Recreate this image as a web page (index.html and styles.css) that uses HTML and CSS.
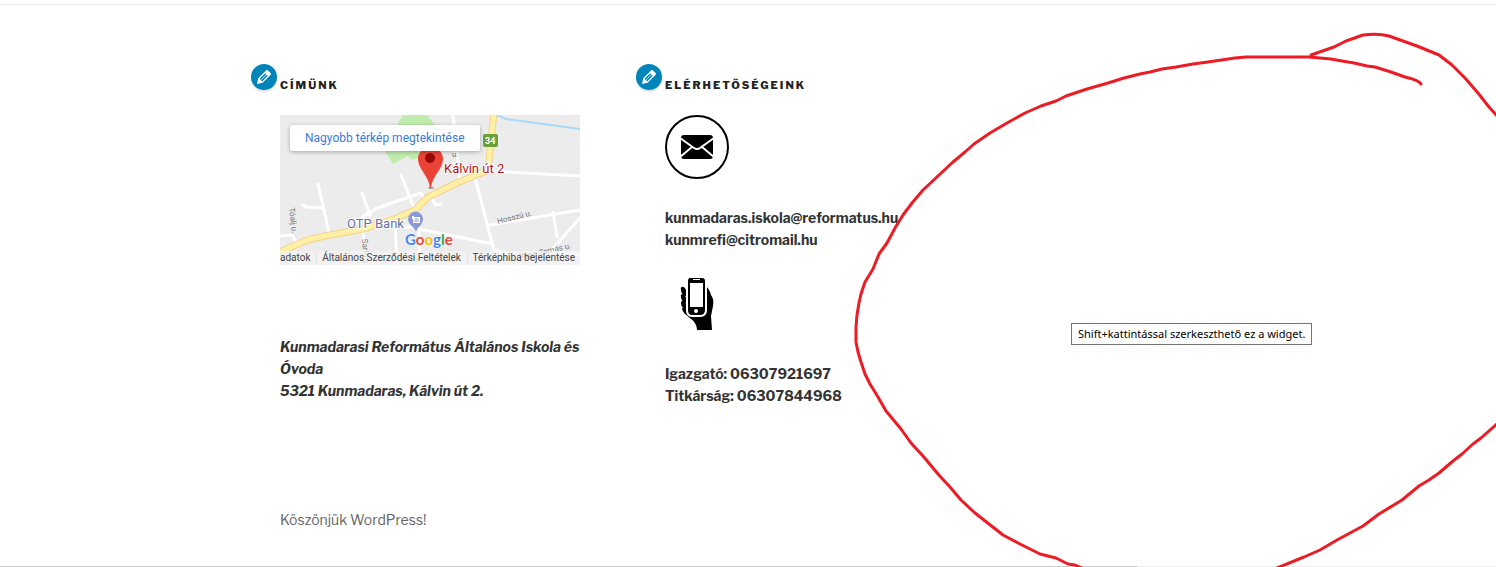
FILE: index.html
```html
<!DOCTYPE html>
<html lang="hu">
<head>
    <meta charset="UTF-8">
    <meta name="viewport" content="width=device-width, initial-scale=1.0">
    <title>Kunmadarasi Református Általános Iskola és Óvoda</title>
    <link rel="stylesheet" href="styles.css">
</head>
<body>

<div class="page">
    <footer class="site-footer">
        <div class="wrap">
            <div class="widgets">
                <section class="widget">
                    <button type="button" class="edit" aria-label="Widget szerkesztése">
                        <svg width="20" height="20" viewBox="0 0 20 20"><path fill="#fff" d="M13.890 3.390l2.710 2.720c.46.46.42 1.240.03 1.640l-8.010 8.020-5.560 1.160 1.160-5.580s7.600-7.630 7.990-8.030c.39-.39 1.220-.39 1.680.07zm-2.730 2.790l-5.590 5.610 1.110 1.110 5.540-5.650zm-2.970 8.230l5.580-5.600-1.070-1.080-5.590 5.600z"/></svg>
                    </button>
                    <h2>Címünk</h2>
                    <div class="map">
                        <svg class="map-canvas" viewBox="0 0 300 150">
                            <rect width="300" height="150" fill="#ececec"/>
                            <path fill="#c0ecae" d="M123 0h24l10 12v22l-17 8-8 3-4-4-15 8-8-13 12-26z"/>
                            <path class="water" d="M217 0l9 4 74 10"/>
                            <g class="road">
                                <path d="M38 69l11 48M23 90l3 2 16 1M82 78l8 22M75 109c10-10 18-15 28-18l38-13 3 5M121 60l14 35M173 0l7 66M152 82l3 8 6-1M0 121l12-1 6 10M83 116l3 34M115 106l2 44M126 112h12"/>
                                <path d="M208 56l92 5M195 63l20 76M210 110l90-15M273 97l4 25M300 103l-32 36M215 135l40 12 16-11 29 4M138 98l2 52M139 114l74 15"/>
                            </g>
                            <path class="main-edge" d="M0 137l27-12 23-5 33-6 34-11 18-8 13-13 29-14 31-13 2-20 4-37"/>
                            <path class="main-road" d="M0 137l27-12 23-5 33-6 34-11 18-8 13-13 29-14 31-13 2-20 4-37"/>
                            <g class="street">
                                <text x="9" y="93" transform="rotate(83 9 93)">Tóalj u.</text>
                                <text x="82" y="124" transform="rotate(86 82 124)">Sarló u.</text>
                                <text x="218" y="109" transform="rotate(-14 218 109)">Hosszú u.</text>
                                <text x="240" y="145" transform="rotate(-13 240 145)">Papp Tamás u.</text>
                                <text x="172" y="42">u.</text>
                            </g>
                            <rect x="203" y="19" width="15" height="13" rx="2" fill="#689f38"/>
                            <text class="shield" x="205" y="29">34</text>
                            <path fill="#8b99d9" d="M136 117c-1-5-8-7-8-13a7 7 0 0 1 15 0c0 6-6 8-7 13z"/>
                            <path fill="#fff" d="M132 101h2v1h6v6h-7v-4h-1z"/>
                            <path fill="none" stroke="#8b99d9" d="M134 106h5M135 104h3"/>
                            <text class="place" x="67" y="113">OTP Bank</text>
                            <ellipse cx="151" cy="73" rx="3" ry="1" fill="#999"/>
                            <path fill="#ea4335" d="M150 73c-1-12-12-19-12-29a12 12 0 0 1 25 0c0 10-11 17-12 29z"/>
                            <circle cx="150" cy="43" r="5" fill="#960a0a"/>
                            <text class="address-label" x="164" y="58">Kálvin út 2</text>
                            <text class="google" x="125" y="130"><tspan fill="#4285f4">G</tspan><tspan fill="#ea4335">o</tspan><tspan fill="#fbbc05">o</tspan><tspan fill="#4285f4">g</tspan><tspan fill="#34a853">l</tspan><tspan fill="#ea4335">e</tspan></text>
                        </svg>
                        <a class="map-link" href="#">Nagyobb térkép megtekintése</a>
                        <div class="map-terms">
                            <a href="#">adatok</a>
                            <a href="#">Általános Szerződési Feltételek</a>
                            <a href="#">Térképhiba bejelentése</a>
                        </div>
                    </div>
                    <p class="address">Kunmadarasi Református Általános Iskola és Óvoda<br>5321 Kunmadaras, Kálvin út 2.</p>
                </section>

                <section class="widget">
                    <button type="button" class="edit" aria-label="Widget szerkesztése">
                        <svg width="20" height="20" viewBox="0 0 20 20"><path fill="#fff" d="M13.890 3.390l2.710 2.720c.46.46.42 1.240.03 1.640l-8.010 8.020-5.560 1.160 1.160-5.580s7.600-7.630 7.990-8.030c.39-.39 1.220-.39 1.680.07zm-2.730 2.790l-5.590 5.610 1.110 1.110 5.540-5.650zm-2.970 8.230l5.580-5.600-1.070-1.080-5.590 5.600z"/></svg>
                    </button>
                    <h2>Elérhetőségeink</h2>
                    <svg class="icon" viewBox="0 0 64 64">
                        <circle cx="32" cy="32" r="31" fill="none" stroke="#000" stroke-width="2"/>
                        <rect x="16" y="20" width="32" height="24" rx="3"/>
                        <path fill="none" stroke="#fff" stroke-width="2" d="M15 23l14 10q3 2 6 0l14-10M15 42l12-10M49 42L37 32"/>
                    </svg>
                    <p>kunmadaras.iskola@reformatus.hu<br>kunmrefi@citromail.hu</p>
                    <svg class="icon phone" viewBox="0 0 64 64">
                        <path d="M40 14c3 1 5 5 6 9 2 3 3 6 2 11l-2 10 1 14H32c0-5-3-9-6-11l-7-6 22-3z"/>
                        <path d="M16 18q-1-4 3-3l3 4v6q-6-2-6-7zM16 25q-1-4 3-2l3 4v4q-6-1-6-6zM16 31q0-3 3-2l4 5v3q-7 0-7-6zM17 36q4-1 6 4v3q-6-2-6-7z"/>
                        <path stroke="#fff" stroke-width="2" d="M25 5h12q4 0 4 4v29q0 6-6 6H27q-5 0-5-6V9q0-4 3-4z"/>
                        <path fill="#fff" d="M25 11h13v24H25zM28 7h7v1h-7z"/>
                        <circle cx="31" cy="39" r="2" fill="#fff"/>
                    </svg>
                    <p>Igazgató: 06307921697<br>Titkárság: 06307844968</p>
                </section>
            </div>
            <div class="site-info"><a href="#">Köszönjük WordPress!</a></div>
        </div>
    </footer>
    <div class="scroll"><div class="scroll-thumb"></div></div>

    <div class="tooltip" role="tooltip">Shift+kattintással szerkeszthető ez a widget.</div>
    <svg class="marker" width="656" height="567" viewBox="840 0 656 567">
        <path d="M1421 84C1417 79 1411 79 1405 77L1391 72 1375 67 1367 66 1354 63 1342 61 1331 59 1309 57H1246L1235 58 1208 62 1193 64 1176 67 1162 69 1150 72 1140 74 1124 78 1108 83 1087 89 1066 96 1056 101 1041 106 1025 113 1007 123 990 133 974 144 965 152 953 162 938 176 923 190 912 203 903 215 895 228 887 243 879 254 873 269 865 282 861 294 859 303 857 315 856 327V342L858 352 861 362 865 374 870 384 878 397 886 411 901 429 911 443 923 456 938 474 950 487 961 500 975 513 989 524 1003 535 1018 543 1040 554 1056 558 1068 564 1075 565 1086 570"/>
        <path d="M1311 55L1334 47 1346 41 1363 35C1370 34 1382 34 1389 36L1417 46 1439 55 1452 65 1465 78 1478 93 1489 107 1498 117"/>
        <path d="M1272 570L1304 557 1320 550 1337 540 1363 526 1379 514 1402 500 1419 486 1429 480 1439 473 1453 461 1462 454 1473 444 1481 438 1498 423"/>
    </svg>
</div>

</body>
</html>
```
FILE: styles.css
```css
body {
    margin: 0;
    background: #fff;
    color: #333;
    font-family: "Libre Franklin", "Liberation Sans", Arial, sans-serif;
    font-size: 14px;
    line-height: 22px;
}
.page {
    position: relative;
    overflow: hidden;
    padding-top: 4px;
}
.site-footer {
    border-top: 1px solid #eee;
}
.wrap {
    max-width: 936px;
    margin: 0 auto;
    padding: 72px 32px 35px;
}
.widgets {
    display: grid;
    grid-template-columns: 36% 1fr;
    gap: 48px;
}
.widget {
    position: relative;
    font-weight: bold;
}
.widget h2 {
    margin: 0 0 22px;
    color: #222;
    font-size: 11px;
    font-weight: 800;
    line-height: 16px;
    letter-spacing: 2px;
    text-transform: uppercase;
}
.widget p {
    margin: 0;
}
.edit {
    position: absolute;
    left: -29px;
    top: -13px;
    width: 26px;
    height: 26px;
    padding: 3px;
    border: none;
    border-radius: 50%;
    background: #0085ba;
    box-shadow: 0 2px 1px rgba(46, 68, 83, 0.15);
    cursor: pointer;
}
.edit svg {
    display: block;
}
.icon {
    display: block;
    width: 64px;
    height: 64px;
    margin-bottom: 28px;
}
.icon.phone {
    margin-top: 21px;
    margin-bottom: 27px;
}
.widget .address {
    margin-top: 71px;
    font-style: italic;
}

/* map */
.map {
    position: relative;
    width: 300px;
    height: 150px;
    overflow: hidden;
    font-family: Roboto, sans-serif;
    font-weight: normal;
}
.map-canvas {
    display: block;
}
.water {
    fill: none;
    stroke: #a9d8fb;
    stroke-width: 2;
}
.road {
    fill: none;
    stroke: #fff;
    stroke-width: 3;
    stroke-linecap: round;
}
.main-edge {
    fill: none;
    stroke: #f6d382;
    stroke-width: 7;
}
.main-road {
    fill: none;
    stroke: #fff0a8;
    stroke-width: 5;
}
.street {
    fill: #777;
    font-size: 8px;
}
.shield {
    fill: #fff;
    font-size: 9px;
    font-weight: bold;
}
.place,
.address-label {
    fill: #6572a8;
    stroke: #fff;
    stroke-width: 2;
    paint-order: stroke;
    font-size: 13px;
}
.address-label {
    fill: #b31412;
}
.google {
    font-family: Lato, sans-serif;
    font-size: 15px;
    font-weight: bold;
    stroke: #fff;
    stroke-width: 1;
    paint-order: stroke;
}
.map-link {
    position: absolute;
    left: 10px;
    top: 10px;
    padding: 2px 15px;
    border-radius: 2px;
    background: #fff;
    box-shadow: 0 1px 4px rgba(0, 0, 0, 0.3);
    color: #3a7bdc;
    font-size: 12px;
    text-decoration: none;
    white-space: nowrap;
}
.map-terms {
    position: absolute;
    right: 0;
    bottom: 0;
    left: 0;
    display: flex;
    justify-content: space-between;
    background: rgba(245, 245, 245, 0.7);
    font-size: 10px;
    line-height: 14px;
    white-space: nowrap;
}
.map-terms a {
    padding-right: 5px;
    color: #444;
    text-decoration: none;
}
.map-terms a + a {
    padding-left: 5px;
    border-left: 1px solid #e4e4e4;
}

.site-info {
    margin-top: 102px;
}
.site-info a {
    color: #666;
    text-decoration: none;
}
.scroll {
    background: #eee;
}
.scroll-thumb {
    width: 76%;
    height: 1px;
    background: #ccc;
}

/* things lying over the page */
.tooltip {
    position: absolute;
    left: 1071px;
    top: 323px;
    padding: 0 6px;
    border: 1px solid #767676;
    background: #fff;
    color: #000;
    font-family: "Segoe UI", "Noto Sans", sans-serif;
    font-size: 11px;
    line-height: 20px;
    white-space: nowrap;
}
.marker {
    position: absolute;
    top: 0;
    right: 0;
    pointer-events: none;
}
.marker path {
    fill: none;
    stroke: #ed1c24;
    stroke-width: 3;
    stroke-linecap: round;
    stroke-linejoin: round;
}
```
